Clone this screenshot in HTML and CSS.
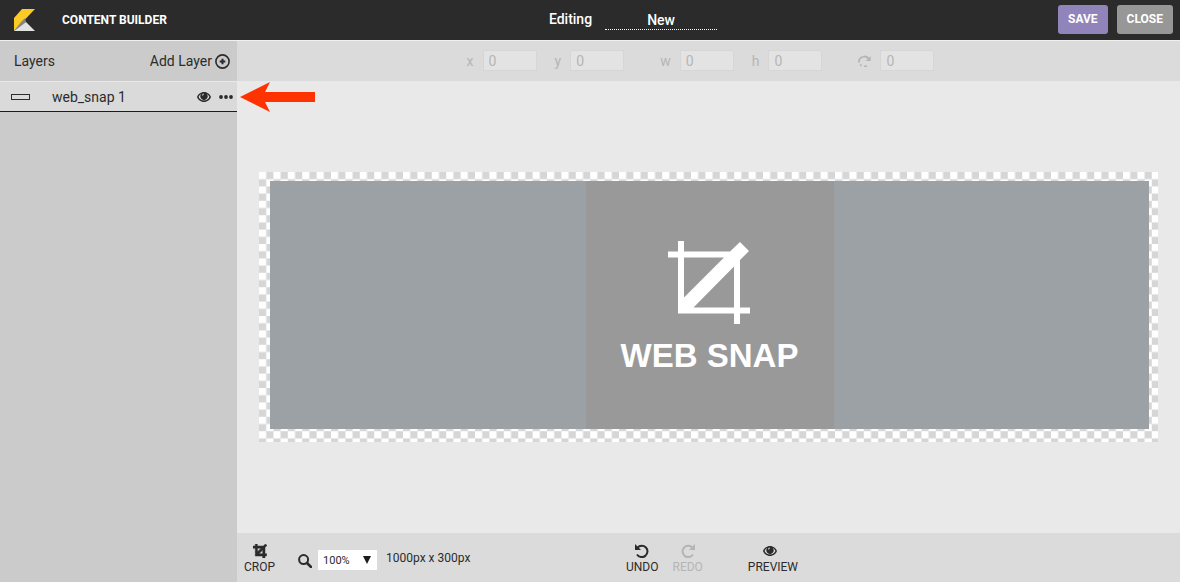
FILE: index.html
```
<!DOCTYPE html>
<html lang="en">
  <head>
    <meta charset="UTF-8" />
    <meta name="viewport" content="width=device-width, initial-scale=1.0" />
    <title>Content Builder</title>
    <link rel="stylesheet" href="styles.css">
  </head>
  <body>
    <header class="header">
      <div class="brand">
        <svg class="logo" viewBox="0 0 21 22" aria-hidden="true">
          <path d="M8 0h13L0 22V9z" fill="#fbcb24" />
          <path d="M12 13L0 22l7-9 4-4z" fill="#85858a" />
          <path d="M12 13l9 9H0z" fill="#e2e2e0" />
        </svg>
        <h1>CONTENT BUILDER</h1>
      </div>
      <div class="doc-name">
        <label for="docName">Editing</label>
        <input type="text" id="docName" value="New">
      </div>
      <div class="header-actions">
        <button type="button" class="button save">SAVE</button>
        <button type="button" class="button close">CLOSE</button>
      </div>
    </header>

    <div class="workspace">
      <aside class="sidebar">
        <div class="sidebar-header">
          <h2>Layers</h2>
          <button type="button" class="add-layer">
            Add Layer
            <svg width="15" height="15" viewBox="0 0 15 15" aria-hidden="true">
              <circle cx="7.5" cy="7.5" r="6.6" fill="none" stroke="currentColor" stroke-width="1.6" />
              <path d="M7.5 4.7v5.6M4.7 7.5h5.6" stroke="currentColor" stroke-width="2" />
            </svg>
          </button>
        </div>
        <ul class="layers">
          <li class="layer">
            <span class="layer-thumb"></span>
            <span class="layer-name">web_snap 1</span>
            <button type="button" class="icon-button" aria-label="Toggle visibility">
              <svg width="14" height="12" viewBox="0 0 14 12"><use href="#eye" /></svg>
            </button>
            <button type="button" class="icon-button" aria-label="Layer options">
              <svg width="14" height="12" viewBox="0 0 14 12">
                <circle cx="2" cy="6" r="1.9" /><circle cx="7" cy="6" r="1.9" /><circle cx="12" cy="6" r="1.9" />
              </svg>
            </button>
            <svg class="pointer" width="76" height="30" viewBox="0 0 76 30" aria-hidden="true">
              <path d="M0 15L30 0l-5 10h50v10H25l5 10z" />
            </svg>
          </li>
        </ul>
      </aside>

      <main class="main">
        <div class="transform-bar">
          <div class="field-pair">
            <div class="field"><label for="posX">x</label><input type="text" id="posX" value="0" disabled></div>
            <div class="field"><label for="posY">y</label><input type="text" id="posY" value="0" disabled></div>
          </div>
          <div class="field-pair">
            <div class="field"><label for="sizeW">w</label><input type="text" id="sizeW" value="0" disabled></div>
            <div class="field"><label for="sizeH">h</label><input type="text" id="sizeH" value="0" disabled></div>
          </div>
          <div class="field">
            <label for="rotation" aria-label="Rotation">
              <svg width="13" height="12" viewBox="0 0 13 12">
                <path d="M1 7.5V6C1.500 1.500 8 0 10.500 3.500" fill="none" stroke="currentColor" stroke-width="1.800" />
                <path d="M12.700 1v5H7.700z" />
                <path d="M2 9.500l1.600 1.300M6 11.200h3" fill="none" stroke="currentColor" stroke-width="1.600" />
              </svg>
            </label>
            <input type="text" id="rotation" value="0" disabled>
          </div>
        </div>

        <div class="stage">
          <div class="canvas">
            <svg class="checker" aria-hidden="true">
              <pattern id="squares" width="14.4" height="14.4" patternUnits="userSpaceOnUse">
                <path d="M0 0h14.400v14.400H0z" fill="#fff" />
                <path d="M7.200 0h7.200v7.200H7.200zM0 7.200h7.200v7.200H0z" fill="#d6d6d6" />
              </pattern>
              <rect width="100%" height="100%" fill="url(#squares)" />
            </svg>
            <div class="banner">
              <div class="snap">
                <svg width="84" height="84" viewBox="0 0 84 84" aria-hidden="true">
                  <path d="M0 10.5h10V0h6v10.500h46L72 1l9 9-9 9v47.500h10v6H72V83h-6V72.500H10v-56H0zM16 16.500v40l40-40zM66 25.500L25.500 66.500H66z" fill-rule="evenodd" />
                </svg>
                <span>WEB SNAP</span>
              </div>
            </div>
          </div>
        </div>

        <footer class="bottom-bar">
          <div class="view-tools">
            <button type="button" class="tool">
              <svg class="crop-icon" width="14" height="14" viewBox="0 0 14 14">
                <path d="M0 2h2.300V0h2v2h6L12.400 0 14 1.400l-2 2v6.300h1.600v2.200H12V14H9.700v-2H2.300V4.200H0zM4.500 4.200v3.600l3.600-3.600zM9.700 6.100L6 9.700h3.700z" fill-rule="evenodd" />
              </svg>
              CROP
            </button>
            <label class="zoom-label" for="zoom" aria-label="Zoom">
              <svg width="14" height="14" viewBox="0 0 14 14">
                <circle cx="5.600" cy="5.600" r="4.500" fill="none" stroke="currentColor" stroke-width="2" />
                <path d="M9 9l4 4" stroke="currentColor" stroke-width="2.500" stroke-linecap="round" />
              </svg>
            </label>
            <span class="zoom-select">
              <select id="zoom">
                <option>50%</option>
                <option selected>100%</option>
                <option>200%</option>
              </select>
            </span>
            <span class="dimensions">1000px x 300px</span>
          </div>
          <div class="history-tools">
            <button type="button" class="tool">
              <svg width="14" height="14" viewBox="0 0 14 14"><use href="#undo" /></svg>
              UNDO
            </button>
            <button type="button" class="tool redo" disabled>
              <svg class="flip" width="14" height="14" viewBox="0 0 14 14"><use href="#undo" /></svg>
              REDO
            </button>
            <button type="button" class="tool preview">
              <svg width="14" height="14" viewBox="0 -1 14 14"><use href="#eye" width="14" height="12" /></svg>
              PREVIEW
            </button>
          </div>
        </footer>
      </main>
    </div>

    <!-- shared icons -->
    <svg class="sprite" aria-hidden="true">
      <symbol id="eye" viewBox="0 0 14 12">
        <path d="M7 1c3.500 0 6 2.400 7 5-1 2.600-3.500 5-7 5S1 8.600 0 6c1-2.600 3.500-5 7-5zM1.600 6C2.600 8.200 4.600 9.600 7 9.600s4.400-1.400 5.400-3.600C11.900 4.700 11 3.700 9.800 3.100a3.600 3.600 0 1 1-5.600 0C3 3.700 2.100 4.700 1.600 6zM7 2.500A2 2 0 0 0 5 4.500h1A1.200 1.200 0 0 1 7 3.300z" fill-rule="evenodd" />
      </symbol>
      <symbol id="undo" viewBox="0 0 14 14">
        <path d="M2.500 3.600A5.700 5.700 0 1 1 2 10.500" fill="none" stroke="currentColor" stroke-width="2" />
        <path d="M0 0l2 2 4 4H0z" />
      </symbol>
    </svg>
  </body>
</html>
```
FILE: styles.css
```
html, body {
  height: 100%;
  margin: 0;
  padding: 0;
}
* {
  box-sizing: border-box;
}
body {
  font-family: Roboto, "Liberation Sans", sans-serif;
  font-size: 14px;
  color: #2b2b2b;
  background-color: #e9e9e9;
  display: flex;
  flex-direction: column;
}
button, input, select {
  font-family: inherit;
  color: inherit;
}
button {
  border: none;
  background: none;
  padding: 0;
  cursor: pointer;
}
svg {
  display: block;
  fill: currentColor;
}
.sprite {
  position: absolute;
  width: 0;
  height: 0;
}

/* header */
.header {
  display: flex;
  align-items: center;
  height: 41px;
  background-color: #2b2b2b;
  border-bottom: 1px solid #f0f0f0;
  color: white;
}
.brand {
  display: flex;
  align-items: center;
  gap: 27px;
  width: 237px;
  padding-left: 14px;
}
.logo {
  width: 21px;
  height: 22px;
}
.brand h1 {
  margin: 0;
  font-size: 12px;
  font-weight: 700;
}
.doc-name {
  flex: 1;
  display: flex;
  justify-content: center;
  align-items: center;
  gap: 13px;
  font-weight: 500;
}
.doc-name input {
  width: 112px;
  height: 20px;
  padding: 0;
  border: none;
  border-bottom: 1px dotted white;
  background: none;
  font-size: 14px;
  font-weight: 500;
  text-align: center;
}
.doc-name label {
  padding-bottom: 2px;
}
.header-actions {
  display: flex;
  justify-content: flex-end;
  gap: 9px;
  width: 151px;
  padding: 0 7px 1px 0;
}
.button {
  height: 29px;
  padding: 0 10px 1px;
  border-radius: 3px;
  color: white;
  font-size: 12px;
  font-weight: 700;
}
.save {
  background-color: #9184bb;
}
.close {
  background-color: #979797;
}

.workspace {
  flex: 1;
  display: flex;
  min-height: 0;
}

/* layers */
.sidebar {
  width: 237px;
  background-color: #cbcbcb;
}
.sidebar-header {
  display: flex;
  justify-content: space-between;
  align-items: center;
  height: 41px;
  padding: 0 7px 0 14px;
  border-bottom: 1px solid #e9e9e9;
}
.sidebar-header h2 {
  margin: 0;
  font-size: 14px;
  font-weight: 400;
}
.add-layer {
  display: flex;
  align-items: center;
  gap: 3px;
  font-size: 14px;
}
.layers {
  margin: 0;
  padding: 0;
  list-style: none;
}
.layer {
  position: relative;
  display: flex;
  align-items: center;
  gap: 8px;
  height: 30px;
  padding: 0 4px 0 11px;
  background-color: #dadada;
  border-bottom: 1px solid #1c1c1c;
}
.layer-thumb {
  width: 19px;
  height: 6px;
  border: 1px solid #2b2b2b;
}
.layer-name {
  flex: 1;
  padding-left: 14px;
}
.pointer {
  position: absolute;
  left: 240px;
  top: 0;
  z-index: 1;
  fill: #ff3300;
}

/* main area */
.main {
  flex: 1;
  display: flex;
  flex-direction: column;
  min-width: 0;
}
.transform-bar {
  display: flex;
  justify-content: center;
  align-items: center;
  gap: 36px;
  height: 40px;
  padding: 0 16px 1px 0;
  background-color: #dbdbdb;
  color: #b5b5b5;
}
.field-pair {
  display: flex;
  gap: 18px;
}
.field {
  display: flex;
  align-items: center;
  gap: 9px;
}
.field input {
  width: 54px;
  height: 21px;
  padding: 0 5px;
  border: 1px solid #d6d6d6;
  background-color: #e3e3e3;
  font-size: 14px;
}
.stage {
  flex: 1;
  display: flex;
  align-items: center;
  padding: 0 22px;
}
.canvas {
  position: relative;
  flex: 1;
  padding: 9px 9px 13px 11px;
}
.checker {
  position: absolute;
  top: 0;
  left: 0;
  width: 100%;
  height: 100%;
}
.banner {
  position: relative;
  display: flex;
  justify-content: center;
  background-color: #9ca1a5;
}
.snap {
  display: flex;
  flex-direction: column;
  align-items: center;
  gap: 11px;
  width: 248px;
  height: 248px;
  padding-top: 60px;
  background-color: #999;
  color: white;
  font-family: "Liberation Sans", Arial, sans-serif;
  font-size: 33px;
  font-weight: 700;
  line-height: 40px;
}

/* bottom bar */
.bottom-bar {
  display: grid;
  grid-template-columns: 1fr auto 1fr;
  height: 49px;
  padding-left: 7px;
  background-color: #dbdbdb;
  font-size: 12px;
}
.view-tools, .history-tools {
  display: flex;
  align-items: center;
}
.tool {
  display: flex;
  flex-direction: column;
  align-items: center;
  gap: 2px;
  padding-top: 3px;
  font-size: 12px;
  line-height: 14px;
}
.tool.redo {
  margin-left: 14px;
  color: #b5b5b5;
}
.tool.preview {
  margin-left: 45px;
}
.tool.preview svg {
  margin-right: 6px;
}
.crop-icon {
  stroke: currentColor;
  stroke-width: 0.5;
}
.flip {
  transform: scaleX(-1);
}
.zoom-label {
  margin: 7px 6px 0 23px;
}
.zoom-select {
  position: relative;
  margin: 5px 9px 0 0;
}
.zoom-select::after {
  content: "";
  position: absolute;
  right: 6px;
  top: 6px;
  border: 4px solid transparent;
  border-top: 8px solid #1c1c1c;
  border-bottom: none;
  pointer-events: none;
}
.zoom-select select {
  display: block;
  appearance: none;
  width: 59px;
  height: 20px;
  padding: 0 5px;
  border: none;
  border-radius: 0;
  background-color: white;
  font-size: 11px;
}
```
